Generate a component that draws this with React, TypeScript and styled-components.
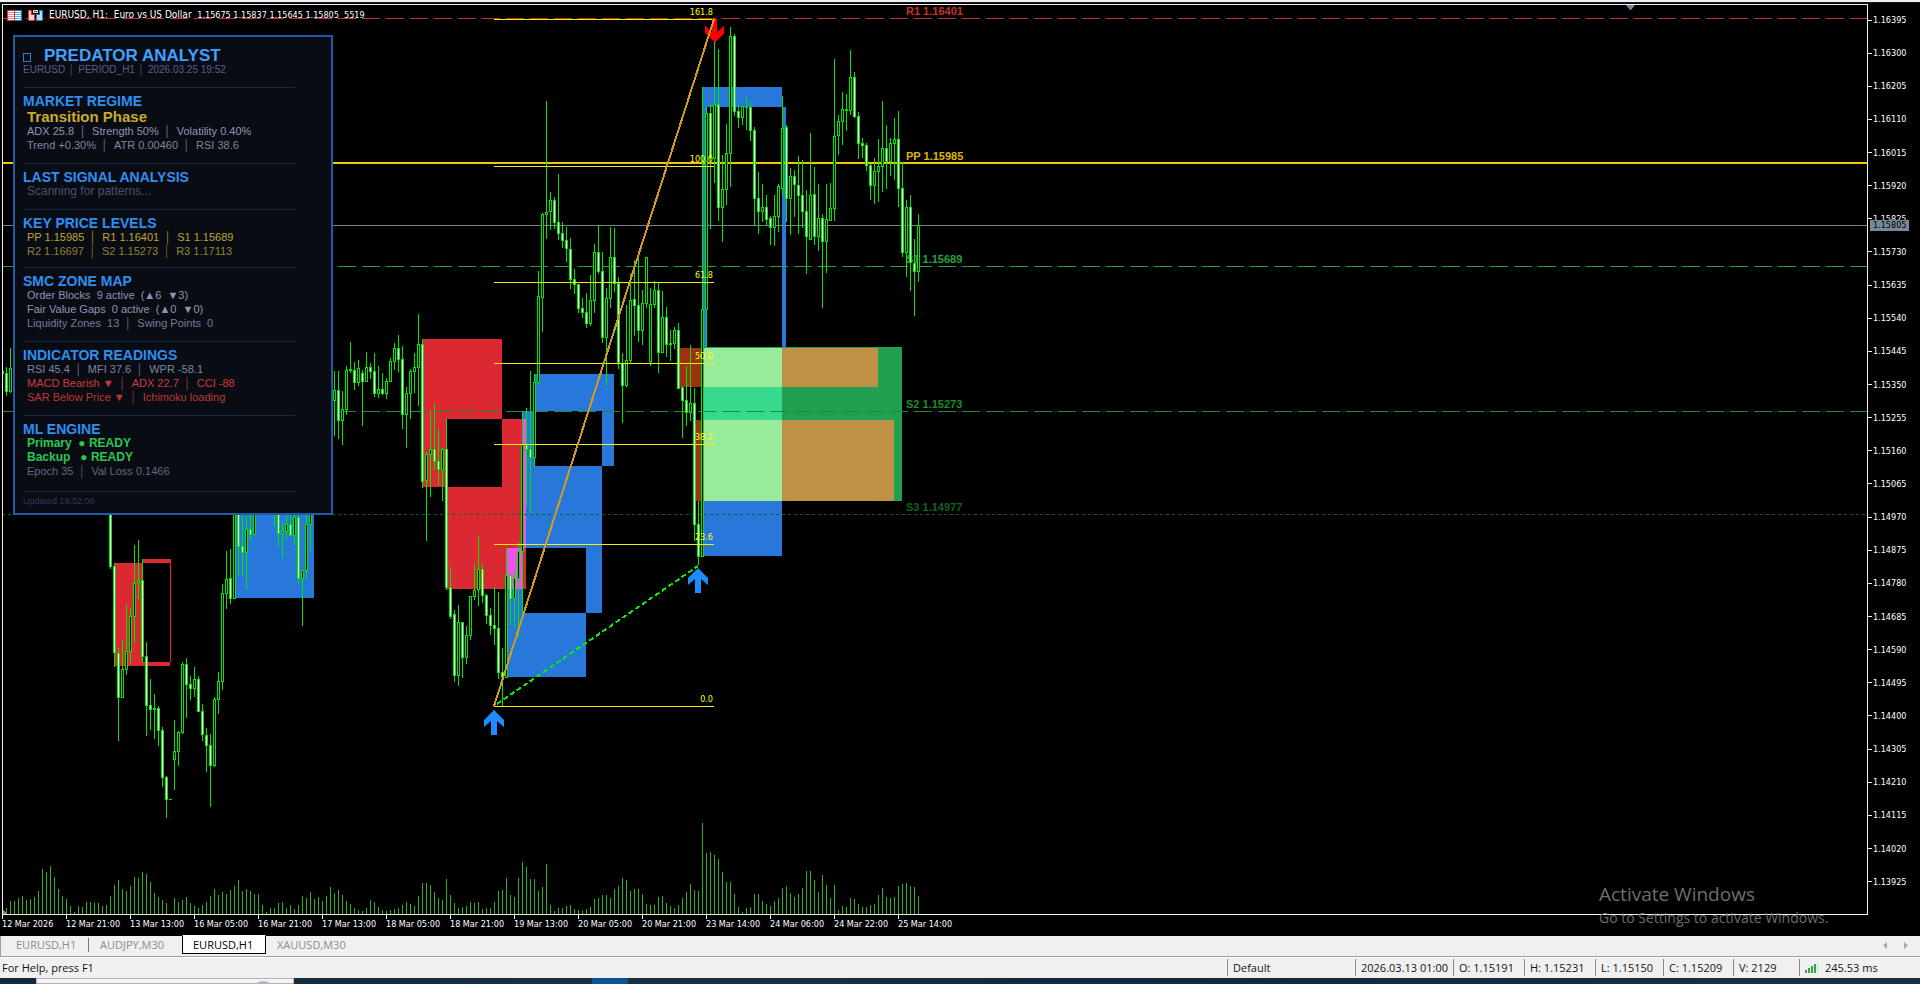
import React from 'react';
import styled, { createGlobalStyle, css } from 'styled-components';

const chartFont = '"DejaVu Sans Condensed", "Noto Sans", sans-serif';
const uiFont = '"Open Sans", "Noto Sans", sans-serif';
const panelFont = '"Liberation Sans", Arial, sans-serif';

/* ---------- data ---------- */

// A bar: body top, body bottom, high, low (in points below the run's ceiling), 1 = rising / 0 = falling.
type Bar = [number, number, number, number, 0 | 1];
interface Run {
  x: number;
  ceiling: number;
  bars: Bar[];
}

const POINTS_PER_PIXEL = 3;
const BAR_STEP = 4;

const runs: Run[] = [
  {
    x: 2,
    ceiling: 260,
    bars: [
      [333, 342, 333, 342, 1], [339, 396, 321, 408, 0], [324, 396, 264, 398, 1],
    ],
  },
  {
    x: 110,
    ceiling: 500,
    bars: [
      [0, 200, 0, 206, 0], [198, 460, 189, 500, 0], [459, 593, 444, 722, 0], [507, 593, 420, 593, 1],
      [454, 509, 312, 525, 1], [349, 455, 324, 492, 1], [250, 350, 135, 429, 1], [240, 250, 120, 297, 1],
      [240, 470, 177, 489, 0], [468, 617, 426, 707, 0], [615, 629, 537, 690, 0], [625, 629, 582, 717, 1],
      [624, 692, 618, 738, 0], [690, 833, 681, 860, 0], [832, 899, 828, 953, 0], [897, 900, 897, 900, 1],
      [753, 779, 660, 870, 1], [696, 755, 692, 798, 1], [492, 698, 486, 702, 1], [492, 554, 474, 654, 0],
      [552, 566, 528, 600, 0], [537, 566, 501, 590, 1], [537, 635, 528, 635, 0], [633, 704, 612, 723, 0],
      [705, 738, 684, 816, 0], [735, 797, 702, 920, 0], [597, 797, 591, 801, 1], [543, 599, 516, 642, 1],
      [279, 545, 252, 570, 1], [237, 281, 153, 327, 1], [234, 296, 147, 312, 0], [0, 296, 0, 296, 1],
      [0, 140, 0, 228, 0], [138, 158, 0, 228, 0], [87, 158, 0, 267, 1], [87, 104, 0, 123, 0],
      [0, 104, 0, 104, 1],
    ],
  },
  {
    x: 274,
    ceiling: 500,
    bars: [
      [0, 30, 0, 77, 1], [0, 101, 0, 137, 0], [94, 101, 66, 174, 1], [72, 95, 0, 117, 1],
      [72, 107, 0, 107, 0], [51, 107, 0, 135, 1], [51, 236, 45, 251, 0], [210, 236, 210, 378, 1],
      [72, 212, 0, 237, 1], [0, 74, 0, 153, 1],
    ],
  },
  {
    x: 334,
    ceiling: 290,
    bars: [
      [300, 332, 243, 438, 1], [300, 392, 243, 447, 0], [357, 392, 303, 465, 1], [240, 359, 228, 375, 1],
      [237, 242, 156, 249, 1], [240, 278, 216, 300, 0], [234, 278, 210, 288, 1], [249, 275, 240, 408, 0],
      [231, 275, 186, 275, 1], [231, 245, 219, 267, 0], [243, 311, 189, 321, 0], [297, 311, 228, 324, 1],
      [297, 311, 249, 315, 0], [273, 311, 264, 327, 1], [213, 275, 204, 275, 1], [174, 215, 159, 240, 1],
      [174, 209, 135, 246, 0], [207, 374, 168, 417, 0], [309, 374, 291, 474, 1], [243, 311, 237, 387, 1],
      [231, 245, 189, 309, 1], [162, 233, 72, 348, 1], [162, 575, 147, 594, 0], [492, 572, 486, 753, 1],
      [477, 494, 363, 621, 1], [477, 515, 339, 540, 0], [513, 539, 417, 585, 0], [477, 539, 474, 633, 1],
      [477, 893, 387, 899, 0],
    ],
  },
  {
    x: 450,
    ceiling: 500,
    bars: [
      [261, 350, 201, 356, 0], [342, 527, 330, 546, 0], [366, 527, 315, 558, 1], [366, 473, 366, 534, 0],
      [405, 473, 378, 492, 1], [288, 407, 288, 419, 1], [270, 290, 189, 300, 1], [207, 269, 108, 318, 1],
      [207, 287, 192, 308, 0], [285, 347, 282, 372, 0], [345, 377, 324, 405, 0], [375, 386, 261, 435, 0],
      [384, 518, 276, 537, 0], [516, 533, 444, 618, 0], [225, 533, 144, 533, 1], [225, 296, 225, 375, 0],
      [234, 296, 213, 384, 1], [153, 236, 126, 413, 1],
    ],
  },
  {
    x: 522,
    ceiling: 290,
    bars: [
      [463, 785, 363, 971, 1], [465, 479, 354, 648, 0], [477, 503, 243, 672, 0], [276, 503, 252, 531, 1],
    ],
  },
  {
    x: 538,
    ceiling: 80,
    bars: [
      [648, 908, 573, 912, 1], [402, 653, 399, 755, 1], [396, 404, 63, 477, 1], [360, 395, 336, 450, 1],
      [360, 428, 351, 447, 0], [426, 461, 282, 480, 0], [459, 482, 426, 504, 0], [480, 508, 441, 546, 0],
      [507, 599, 474, 627, 0], [597, 614, 567, 642, 0], [612, 686, 612, 698, 0], [684, 698, 654, 714, 0],
      [696, 731, 639, 744, 0], [660, 731, 585, 738, 1], [516, 662, 492, 699, 1], [516, 575, 435, 581, 0],
      [573, 773, 516, 789, 0], [654, 773, 624, 914, 1], [531, 656, 441, 684, 1], [531, 611, 444, 636, 0],
      [609, 850, 591, 867, 0], [850, 917, 819, 1029, 0], [840, 917, 675, 920, 1], [660, 842, 582, 848, 1],
      [657, 677, 540, 768, 0], [675, 752, 534, 786, 0], [669, 752, 630, 795, 1], [531, 671, 531, 684, 1],
      [673, 845, 624, 858, 1], [630, 674, 603, 684, 1], [630, 818, 609, 878, 0], [711, 818, 633, 818, 1],
      [711, 794, 681, 830, 0], [790, 794, 750, 842, 1], [750, 791, 741, 806, 1], [750, 926, 729, 928, 0],
    ],
  },
  {
    x: 682,
    ceiling: 290,
    bars: [
      [291, 332, 291, 443, 0], [330, 368, 228, 408, 0], [339, 368, 165, 393, 1], [339, 704, 294, 752, 0],
      [702, 800, 633, 825, 0],
    ],
  },
  {
    x: 702,
    ceiling: 0,
    bars: [
      [928, 1670, 261, 1670, 1], [339, 929, 321, 1041, 1], [339, 477, 312, 687, 0], [312, 476, 60, 549, 1],
      [312, 623, 147, 663, 0], [567, 623, 465, 726, 1], [459, 569, 372, 615, 1], [108, 461, 81, 561, 1],
      [108, 335, 102, 348, 0], [333, 353, 315, 384, 0], [318, 353, 318, 375, 1], [321, 324, 288, 390, 1],
      [321, 392, 306, 423, 0], [390, 596, 381, 677, 0], [594, 635, 516, 702, 0], [621, 635, 552, 666, 1],
      [621, 659, 585, 678, 0], [654, 683, 648, 735, 0], [648, 683, 585, 738, 1], [558, 650, 552, 696, 1],
      [384, 566, 288, 588, 1], [381, 596, 375, 666, 0], [528, 597, 504, 705, 1], [528, 556, 510, 651, 0],
      [555, 587, 468, 702, 0], [585, 635, 480, 684, 0], [633, 710, 570, 822, 0], [585, 719, 399, 719, 1],
      [582, 710, 501, 735, 0], [654, 710, 552, 753, 1], [654, 725, 642, 924, 0], [657, 725, 552, 819, 1],
      [624, 662, 549, 662, 1], [408, 626, 177, 663, 1], [363, 407, 345, 465, 1], [327, 365, 276, 435, 1],
      [327, 332, 282, 393, 1], [231, 332, 150, 345, 1], [231, 350, 216, 353, 0], [348, 431, 336, 476, 0],
      [429, 437, 414, 474, 0], [435, 497, 429, 513, 0], [495, 557, 492, 600, 0], [513, 557, 474, 612, 1],
      [498, 515, 417, 606, 1], [444, 500, 303, 576, 1], [444, 486, 375, 567, 0], [429, 486, 414, 528, 1],
      [417, 431, 354, 540, 1], [417, 567, 333, 621, 0], [564, 758, 486, 771, 0], [621, 758, 600, 831, 1],
      [621, 790, 585, 873, 0], [789, 815, 717, 947, 0], [675, 815, 642, 846, 1],
    ],
  },
];

const volumes = [
  6, 13, 13, 16, 18, 14, 15, 17, 23, 45, 42, 48, 37, 25, 18, 15, 8, 2, 8, 7, 12, 12, 11, 11, 8, 9, 18, 29, 34, 25,
  23, 28, 37, 36, 42, 40, 32, 21, 17, 14, 11, 0, 16, 12, 14, 17, 11, 8, 6, 9, 12, 18, 25, 19, 22, 20, 24, 28, 34,
  23, 25, 23, 20, 20, 9, 2, 6, 6, 11, 12, 6, 9, 5, 9, 18, 16, 22, 15, 17, 13, 18, 27, 21, 24, 19, 13, 10, 6, 4, 3,
  6, 14, 12, 7, 4, 3, 4, 5, 6, 9, 12, 10, 8, 18, 31, 31, 29, 22, 16, 14, 35, 19, 11, 6, 7, 8, 12, 11, 12, 5, 6, 6,
  12, 23, 24, 36, 19, 17, 36, 52, 47, 35, 35, 23, 27, 50, 9, 3, 6, 6, 8, 9, 5, 4, 3, 5, 7, 15, 16, 19, 19, 16, 25,
  28, 36, 34, 23, 25, 25, 20, 10, 9, 9, 17, 18, 11, 8, 6, 9, 16, 22, 30, 24, 23, 91, 61, 62, 59, 55, 42, 32, 32,
  20, 7, 2, 6, 7, 20, 20, 13, 10, 8, 13, 16, 26, 28, 21, 17, 20, 26, 43, 43, 34, 22, 39, 29, 16, 29, 4, 8, 7, 16,
  15, 10, 7, 7, 9, 10, 19, 26, 17, 16, 17, 28, 30, 31, 28, 27, 18,
];

const prices = Array.from({ length: 27 }, (_, i) => (1.16395 - i * 0.00095).toFixed(5));

const times = [
  '12 Mar 2026', '12 Mar 21:00', '13 Mar 13:00', '16 Mar 05:00', '16 Mar 21:00', '17 Mar 13:00', '18 Mar 05:00',
  '18 Mar 21:00', '19 Mar 13:00', '20 Mar 05:00', '20 Mar 21:00', '23 Mar 14:00', '24 Mar 06:00', '24 Mar 22:00',
  '25 Mar 14:00',
];

const RED = '#dc2832';
const BLUE = '#2878dc';
const MAGENTA = '#f450ee';
const GREEN = '#20a050';
const LIGHT = '#98eb98';
const AMBER = '#be9145';
const BROWN = '#a03214';

// left, top, right, bottom, colour
const zones: [number, number, number, number, string][] = [
  [115, 563, 142, 666, RED], [143, 559, 171, 563, RED], [170, 563, 171, 662, RED], [142, 662, 170, 666, RED],
  [236, 500, 314, 598, BLUE],
  [423, 339, 502, 419, RED], [423, 419, 447, 487, RED], [502, 419, 526, 487, RED], [447, 487, 526, 589, RED],
  [535, 374, 614, 411, BLUE], [602, 411, 614, 466, BLUE], [523, 411, 535, 466, BLUE], [523, 466, 602, 548, BLUE],
  [586, 548, 602, 613, BLUE], [507, 589, 523, 613, BLUE], [507, 613, 586, 677, BLUE],
  [523, 419, 526, 548, MAGENTA], [507, 548, 523, 589, MAGENTA],
  [703, 87, 782, 107, BLUE], [703, 107, 706, 347, BLUE], [782, 107, 786, 347, BLUE], [704, 501, 782, 556, BLUE],
  [704, 347, 902, 501, GREEN], [704, 387, 782, 420, '#37da8c'],
  [704, 348, 782, 387, LIGHT], [704, 420, 782, 501, LIGHT],
  [782, 348, 878, 387, AMBER], [782, 420, 894, 501, AMBER],
  [679, 348, 703, 387, BROWN], [695, 420, 703, 501, BROWN],
];

const pivots = [
  { label: 'R1 1.16401', y: 18, textY: 15, color: '#c8322d', width: 1, dash: '18 6' },
  { label: 'PP 1.15985', y: 162, textY: 160, color: '#f0c800', textColor: '#dcb40a', width: 2 },
  { label: 'S1 1.15689', y: 266, textY: 263, color: '#28a03c', width: 1, dash: '18 6' },
  { label: 'S2 1.15273', y: 411, textY: 408, color: '#1e8c2d', width: 1, dash: '18 6' },
  { label: 'S3 1.14977', y: 514, textY: 511, color: '#0f641e', width: 1, dash: '3 3' },
];

const fibs = [
  { label: '161.8', y: 19 },
  { label: '100.0', y: 166 },
  { label: '61.8', y: 282 },
  { label: '50.0', y: 363 },
  { label: '38.2', y: 444 },
  { label: '23.6', y: 544 },
  { label: '0.0', y: 706 },
];

/* ---------- chart drawing ---------- */

const box = (x: number, y: number, w: number, h: number) => `M${x} ${y}h${w}v${h}h${-w}z`;

function buildCandles() {
  let wicks = '';
  let bodies = '';
  let rising = '';
  let falling = '';
  for (const run of runs) {
    run.bars.forEach(([top, bottom, high, low, up], i) => {
      const x = run.x + i * BAR_STEP;
      const y = (v: number) => run.ceiling + Math.round(v / POINTS_PER_PIXEL);
      const h = Math.max(1, y(bottom) - y(top));
      wicks += box(x, y(high), 1, Math.max(1, y(low) - y(high)));
      bodies += box(x - 1, y(top), 3, h);
      if (h > 2) {
        const core = box(x, y(top) + 1, 1, h - 2);
        if (up) rising += core;
        else falling += core;
      }
    });
  }
  return { wicks, bodies, rising, falling };
}

const candles = buildCandles();
const volumePath = volumes.map((v, i) => (v ? box(6 + i * BAR_STEP, -v, 1, v) : '')).join('');

const Drawing = styled.svg`
  display: block;
  position: absolute;
  inset: 0;
  width: 100%;
  height: 100%;
`;

const FibLabel = styled.text`
  font: 9px ${chartFont};
  fill: #ffff00;
  text-anchor: end;
`;

const PivotLabel = styled.text`
  font: bold 11px ${panelFont};
`;

function ChartDrawing() {
  return (
    <Drawing aria-label="EURUSD H1 candles" role="img">
      <g transform="translate(-3 -5)" shapeRendering="crispEdges">
        {zones.map(([l, t, r, b, color], i) => (
          <rect key={i} x={l} y={t} width={r - l} height={b - t} fill={color} />
        ))}
        {pivots.map((p) => (
          <g key={p.label}>
            <line
              x1="2"
              x2="110%"
              y1={p.y + p.width / 2}
              y2={p.y + p.width / 2}
              stroke={p.color}
              strokeWidth={p.width}
              strokeDasharray={p.dash}
            />
            <PivotLabel x="906" y={p.textY} fill={p.textColor ?? p.color}>
              {p.label}
            </PivotLabel>
          </g>
        ))}
        <rect x="2" y="225" width="110%" height="1" fill="#748294" />
        <path d={candles.wicks} fill="#00e600" />
        <path d={candles.bodies} fill="#00e600" />
        <path d={candles.rising} fill="#000" />
        <path d={candles.falling} fill="#fff" />
        {fibs.map((f) => (
          <g key={f.label}>
            <rect x="494" y={f.y} width="220" height="1" fill="#f0f000" />
            <FibLabel x="713" y={f.y - 4}>
              {f.label}
            </FibLabel>
          </g>
        ))}
        <path d="M712 19h5v13l7-6v7l-9 9l-10-9v-7l7 6z" fill="#ff0000" />
        <line x1="494" y1="706" x2="714" y2="19" stroke="#d29b1e" strokeWidth="2" />
        <line x1="497" y1="704" x2="698" y2="566" stroke="#00f000" strokeWidth="2" strokeDasharray="5 3" />
        <g fill="#1e8cff" shapeRendering="auto">
          <path id="buy" d="M494 710l10 10v7l-7-6v14h-6v-14l-7 6v-7z" />
          <use href="#buy" x="204" y="-142" />
        </g>
      </g>
      <svg x="100%" overflow="visible">
        <path d="M-241 0h9l-4 5h-1z" fill="#778899" />
      </svg>
      <svg y="100%" overflow="visible" shapeRendering="crispEdges">
        <path d={volumePath} transform="translate(-3 0)" fill="#28b428" />
        <path d="M0-4l4 4h-4z" fill="#778899" />
      </svg>
    </Drawing>
  );
}

/* ---------- layout ---------- */

const GlobalStyle = createGlobalStyle`
  *, *::before, *::after { box-sizing: border-box; }
  body { margin: 0; background: #000; }
  h1, h2, p { margin: 0; font-weight: normal; }
  button { margin: 0; padding: 0; border: 0; background: none; font: inherit; color: inherit; }
`;

const Screen = styled.div`
  display: flex;
  flex-direction: column;
  min-height: 100vh;
  background: #000;
`;

const ToolbarEdge = styled.div`
  height: 2px;
  background: #f0f0f4;
`;

const ChartWindow = styled.main`
  flex: 1;
  display: grid;
  grid-template-columns: minmax(0, 1fr) 52px;
  grid-template-rows: minmax(0, 1fr) 21px;
  position: relative;
  padding: 1px 0 0 2px;
  border-top: 1px solid #16181c;
  font: 9px/12px ${chartFont};
  color: #fff;
`;

const Plot = styled.section`
  position: relative;
  border: 1px solid #f0f0f0;
  overflow: hidden;
`;

const PlotHeader = styled.header`
  position: absolute;
  left: 4px;
  top: 4px;
  display: flex;
  align-items: center;
  gap: 6px;
  white-space: pre;
`;

const SymbolName = styled.span`
  font-size: 10px;
`;

const PriceAxis = styled.div`
  position: relative;
  display: flex;
  flex-direction: column;
  justify-content: space-between;
  padding: 10px 0 27px;
`;

const PriceTick = styled.div`
  display: flex;
  align-items: center;
  gap: 1px;
  &::before {
    content: '';
    width: 4px;
    height: 1px;
    background: #f0f0f0;
  }
`;

const PriceTag = styled.div`
  position: absolute;
  left: 2px;
  top: 216px;
  width: 39px;
  padding-left: 3px;
  line-height: 11px;
  background: #778899;
  color: #000;
`;

const TimeAxis = styled.div`
  display: flex;
  overflow: hidden;
`;

const TimeTick = styled.div`
  flex: 0 0 64px;
  white-space: nowrap;
  &::before {
    content: '';
    display: block;
    width: 1px;
    height: 4px;
    margin-bottom: -1px;
    background: #f0f0f0;
  }
`;

const Watermark = styled.aside`
  position: absolute;
  right: 85px;
  bottom: 8px;
  width: 236px;
  color: #6e6e6e;
  font: 14px/20px ${uiFont};
  white-space: nowrap;
`;

const WatermarkTitle = styled.p`
  font-size: 19px;
  line-height: 28px;
`;

/* ---------- analyst panel ---------- */

const Panel = styled.article`
  position: absolute;
  left: 10px;
  top: 30px;
  width: 320px;
  padding: 12px 36px 5px 8px;
  border: 2px solid #1e5caa;
  background: #0a0c14;
  font: 11px/14px ${panelFont};
  white-space: pre;
`;

const Group = styled.section<{ $after?: number }>`
  padding-bottom: ${(p) => p.$after ?? 11}px;
  & + & {
    border-top: 1px solid #1a2646;
    padding-top: 7px;
  }
`;

const PanelTitle = styled.h1`
  display: flex;
  align-items: flex-end;
  gap: 13px;
  font: bold 17px/14px ${panelFont};
  color: #40a0ff;
`;

const MissingGlyph = styled.span`
  width: 8px;
  height: 9px;
  margin-bottom: 1px;
  border: 1px solid #2f7fd0;
`;

const GroupTitle = styled.h2`
  font: bold 14px/13px ${panelFont};
  color: #2f8ff0;
`;

const Line = styled.p<{ $tone: string; $kind?: 'phase' | 'status' | 'scan' | 'sub' }>`
  padding-left: 4px;
  color: ${(p) => p.$tone};
  ${(p) => p.$kind === 'phase' && css`padding-top: 2px; font: bold 15px/14px ${panelFont};`}
  ${(p) => p.$kind === 'status' && css`font: bold 12px/14px ${panelFont};`}
  ${(p) => p.$kind === 'scan' && css`font-size: 12px;`}
  ${(p) => p.$kind === 'sub' && css`padding-left: 0; font: 10px/13px ${panelFont};`}
`;

const Bar = styled.span<{ $tight?: boolean }>`
  display: inline-block;
  width: ${(p) => (p.$tight ? 13 : 18)}px;
  text-align: center;
  opacity: 0.8;
`;

const Stamp = styled.p`
  margin-top: -5px;
  font-size: 9px;
  color: #30365c;
`;

function Fields({ items, tone, tight }: { items: string[]; tone: string; tight?: boolean }) {
  return (
    <Line $tone={tone} $kind={tight ? 'sub' : undefined}>
      {items.map((item, i) => (
        <React.Fragment key={item}>
          {i > 0 && <Bar $tight={tight}>│</Bar>}
          {item}
        </React.Fragment>
      ))}
    </Line>
  );
}

function AnalystPanel() {
  return (
    <Panel>
      <Group>
        <PanelTitle>
          <MissingGlyph />
          PREDATOR ANALYST
        </PanelTitle>
        <Fields tight tone="#566089" items={['EURUSD', 'PERIOD_H1', '2026.03.25 19:52']} />
      </Group>
      <Group>
        <GroupTitle>MARKET REGIME</GroupTitle>
        <Line $tone="#c8aa32" $kind="phase">Transition Phase</Line>
        <Fields tone="#8c96b4" items={['ADX 25.8', 'Strength 50%', 'Volatility 0.40%']} />
        <Fields tone="#7d87a0" items={['Trend +0.30%', 'ATR 0.00460', 'RSI 38.6']} />
      </Group>
      <Group>
        <GroupTitle>LAST SIGNAL ANALYSIS</GroupTitle>
        <Line $tone="#4b5070" $kind="scan">Scanning for patterns...</Line>
      </Group>
      <Group $after={9}>
        <GroupTitle>KEY PRICE LEVELS</GroupTitle>
        <Fields tone="#bea532" items={['PP 1.15985', 'R1 1.16401', 'S1 1.15689']} />
        <Fields tone="#91822d" items={['R2 1.16697', 'S2 1.15273', 'R3 1.17113']} />
      </Group>
      <Group>
        <GroupTitle>SMC ZONE MAP</GroupTitle>
        <Line $tone="#8c96b4">{'Order Blocks  9 active  (▲6  ▼3)'}</Line>
        <Line $tone="#8c96b4">{'Fair Value Gaps  0 active  (▲0  ▼0)'}</Line>
        <Fields tone="#737d96" items={['Liquidity Zones  13', 'Swing Points  0']} />
      </Group>
      <Group>
        <GroupTitle>INDICATOR READINGS</GroupTitle>
        <Fields tone="#7d87a0" items={['RSI 45.4', 'MFI 37.6', 'WPR -58.1']} />
        <Fields tone="#cd3c3c" items={['MACD Bearish ▼', 'ADX 22.7', 'CCI -88']} />
        <Fields tone="#be3737" items={['SAR Below Price ▼', 'Ichimoku loading']} />
      </Group>
      <Group $after={13}>
        <GroupTitle>ML ENGINE</GroupTitle>
        <Line $tone="#28c850" $kind="status">{'Primary  ● READY'}</Line>
        <Line $tone="#28c850" $kind="status">{'Backup   ● READY'}</Line>
        <Fields tone="#5f6982" items={['Epoch 35', 'Val Loss 0.1466']} />
      </Group>
      <Group $after={0}>
        <Stamp>Updated 19:52:06</Stamp>
      </Group>
    </Panel>
  );
}

/* ---------- bottom bars ---------- */

const TabStrip = styled.nav`
  display: flex;
  align-items: flex-start;
  height: 21px;
  padding-left: 4px;
  border-left: 1px solid #a0a0a0;
  border-bottom: 1px solid #a0a0a0;
  background: #f0f0f0;
  font: 11px/18px ${uiFont};
  color: #8c8c8c;
`;

const Tab = styled.button<{ $width: number; $active?: boolean; $divided?: boolean }>`
  position: relative;
  flex: 0 0 ${(p) => p.$width}px;
  height: 18px;
  padding: 0 11px;
  text-align: left;
  ${(p) =>
    p.$divided &&
    css`
      &::after {
        content: '';
        position: absolute;
        right: 0;
        top: 2px;
        width: 1px;
        height: 14px;
        background: #787878;
      }
    `}
  ${(p) =>
    p.$active &&
    css`
      z-index: 1;
      height: 19px;
      margin-top: -1px;
      padding: 0 10px;
      border: 1px solid #000;
      border-top-color: #fff;
      background: #fff;
      color: #000;
    `}
`;

const Scrollers = styled.div`
  display: flex;
  gap: 17px;
  margin: 6px 12px 0 auto;
`;

const Scroller = styled.button`
  display: block;
  width: 4px;
  height: 7px;
  svg { display: block; }
`;

const StatusBar = styled.footer`
  display: flex;
  height: 21px;
  padding: 1px 0 2px;
  border-top: 1px solid #fff;
  background: #f0f0f0;
  font: 11px/17px ${uiFont};
  color: #141414;
`;

const Hint = styled.span`
  flex: 1;
  padding-left: 2px;
`;

const Cell = styled.span<{ $width: number }>`
  display: flex;
  align-items: center;
  gap: 7px;
  flex: 0 0 ${(p) => p.$width}px;
  padding-left: 5px;
  border-left: 1px solid #8c8c8c;
  white-space: nowrap;
`;

const Taskbar = styled.div`
  display: flex;
  height: 6px;
  padding-left: 36px;
  overflow: hidden;
  background: linear-gradient(90deg, #12293d, #1a303f 40%, #12283e 55%, #17303f);
`;

const SearchBox = styled.div`
  width: 258px;
  padding: 2px 0 0 214px;
  border: 1px solid #b4b4b4;
  background: #f3f3f7;
`;

const Avatar = styled.div`
  width: 24px;
  height: 24px;
  border-radius: 50%;
  background: #b9afc6;
`;

const ActiveTask = styled.div`
  width: 36px;
  margin-left: 298px;
  background: #0b5394;
`;

const cells: [string, number][] = [
  ['Default', 128],
  ['2026.03.13 01:00', 98],
  ['O: 1.15191', 71],
  ['H: 1.15231', 71],
  ['L: 1.15150', 68],
  ['C: 1.15209', 70],
  ['V: 2129', 66],
];

function BookIcon() {
  return (
    <svg width="15" height="11" shapeRendering="crispEdges">
      <rect width="8" height="11" fill="#d8312b" />
      <rect x="1" y="1" width="6" height="9" fill="#fff" />
      <rect x="8" width="7" height="11" fill="#1c78c0" />
      <rect x="8" y="1" width="6" height="9" fill="#fff" />
      <path d="M1 2h6v1h-6zM1 4h6v1h-6zM1 6h6v1h-6zM1 8h6v1h-6z" fill="#f08078" />
      <path d="M8 2h6v1h-6zM8 4h6v1h-6zM8 6h6v1h-6zM8 8h6v1h-6z" fill="#60a8e0" />
    </svg>
  );
}

function DepthIcon() {
  return (
    <svg width="15" height="11" shapeRendering="crispEdges">
      <path d="M0 0h4v4h3v7h-7z" fill="#d8312b" />
      <path d="M1 1h2v4h3v5h-5z" fill="#ffd0cc" />
      <path d="M15 0h-4v4h-3v7h7z" fill="#1c78c0" />
      <path d="M14 1h-2v4h-3v5h5z" fill="#b8dcff" />
      <path d="M5 0h5v3h-5z" fill="#d8d4c8" />
      <path d="M6 1h3v1h-3z" fill="#605c50" />
    </svg>
  );
}

export default function App() {
  return (
    <Screen>
      <GlobalStyle />
      <ToolbarEdge />
      <ChartWindow>
        <Plot>
          <ChartDrawing />
          <PlotHeader>
            <BookIcon />
            <DepthIcon />
            <span>
              <SymbolName>{'EURUSD, H1:  Euro vs US Dollar  '}</SymbolName>
              {'1.15675 1.15837 1.15645 1.15805  5519'}
            </span>
          </PlotHeader>
          <AnalystPanel />
        </Plot>
        <PriceAxis>
          {prices.map((p) => (
            <PriceTick key={p}>{p}</PriceTick>
          ))}
          <PriceTag>1.15805</PriceTag>
        </PriceAxis>
        <TimeAxis>
          {times.map((t) => (
            <TimeTick key={t}>{t}</TimeTick>
          ))}
        </TimeAxis>
        <Watermark>
          <WatermarkTitle>Activate Windows</WatermarkTitle>
          <p>Go to Settings to activate Windows.</p>
        </Watermark>
      </ChartWindow>
      <TabStrip aria-label="Charts">
        <Tab $width={84} $divided>EURUSD,H1</Tab>
        <Tab $width={93}>AUDJPY,M30</Tab>
        <Tab $width={84} $active>EURUSD,H1</Tab>
        <Tab $width={93}>XAUUSD,M30</Tab>
        <Scrollers>
          <Scroller aria-label="Previous chart">
            <svg width="4" height="7"><path d="M4 0v7L0 3.5z" fill="#a8a8a8" /></svg>
          </Scroller>
          <Scroller aria-label="Next chart">
            <svg width="4" height="7"><path d="M0 0v7l4-3.5z" fill="#a8a8a8" /></svg>
          </Scroller>
        </Scrollers>
      </TabStrip>
      <StatusBar>
        <Hint>For Help, press F1</Hint>
        {cells.map(([text, width]) => (
          <Cell key={text} $width={width}>{text}</Cell>
        ))}
        <Cell $width={121}>
          <svg width="13" height="10" shapeRendering="crispEdges">
            <path d="M0 7h2v3h-2zM3 5h2v5h-2zM6 3h2v7h-2zM9 1h2v9h-2z" fill="#28aa3c" />
            <path d="M12 0h1v10h-1z" fill="#d2d2d2" />
          </svg>
          245.53 ms
        </Cell>
      </StatusBar>
      <Taskbar>
        <SearchBox>
          <Avatar />
        </SearchBox>
        <ActiveTask />
      </Taskbar>
    </Screen>
  );
}
